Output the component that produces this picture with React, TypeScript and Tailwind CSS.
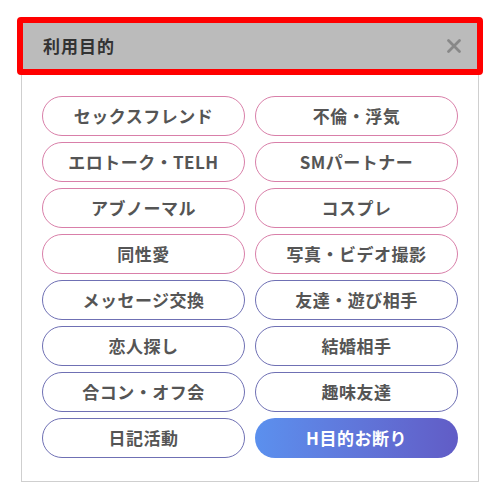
import React from "react";

const items: { label: string; tone: "pink" | "blue" | "active" }[] = [
  { label: "セックスフレンド", tone: "pink" },
  { label: "不倫・浮気", tone: "pink" },
  { label: "エロトーク・TELH", tone: "pink" },
  { label: "SMパートナー", tone: "pink" },
  { label: "アブノーマル", tone: "pink" },
  { label: "コスプレ", tone: "pink" },
  { label: "同性愛", tone: "pink" },
  { label: "写真・ビデオ撮影", tone: "pink" },
  { label: "メッセージ交換", tone: "blue" },
  { label: "友達・遊び相手", tone: "blue" },
  { label: "恋人探し", tone: "blue" },
  { label: "結婚相手", tone: "blue" },
  { label: "合コン・オフ会", tone: "blue" },
  { label: "趣味友達", tone: "blue" },
  { label: "日記活動", tone: "blue" },
  { label: "H目的お断り", tone: "active" },
];

export default function App() {
  return (
    <div
      className="w-[500px] h-[500px] bg-white relative pt-[21px] pl-[21px]"
      style={{ fontFamily: '"Noto Sans CJK JP", "Noto Sans", sans-serif' }}
    >
      <div className="w-[458px] h-[461px] border border-[#cfcfcf] border-t-0 flex flex-col">
        <div className="h-[50px] bg-[#bbbbbb] flex items-center justify-between pl-[21px] pr-[16px]">
          <span className="text-[17px] font-bold text-[#333333] tracking-[1px]">利用目的</span>
          <svg width="16" height="16" viewBox="0 0 16 16">
            <path d="M2.5 2.5 L13.5 13.5 M13.5 2.5 L2.5 13.5" stroke="#888888" strokeWidth="2.8" strokeLinecap="round" />
          </svg>
        </div>
        <div className="grid grid-cols-2 gap-x-[10px] gap-y-[6px] px-[20px] pt-[25px]">
          {items.map((it) => (
            <div
              key={it.label}
              className={
                it.tone === "active"
                  ? "h-[40px] rounded-full flex items-center justify-center text-[17px] font-bold text-white tracking-[0.5px] bg-gradient-to-r from-[#5b90ee] to-[#615cc6]"
                  : it.tone === "pink"
                  ? "h-[40px] rounded-full border-[1.5px] border-[#d97fa9] bg-white flex items-center justify-center text-[17px] font-bold text-[#555555] tracking-[0.5px]"
                  : "h-[40px] rounded-full border-[1.5px] border-[#6f70b4] bg-white flex items-center justify-center text-[17px] font-bold text-[#555555] tracking-[0.5px]"
              }
            >
              {it.label}
            </div>
          ))}
        </div>
      </div>
      <div className="absolute left-[17px] top-[17px] w-[466px] h-[58px] border-[6px] border-[#ff0000] rounded-[4px] pointer-events-none" />
    </div>
  );
}
